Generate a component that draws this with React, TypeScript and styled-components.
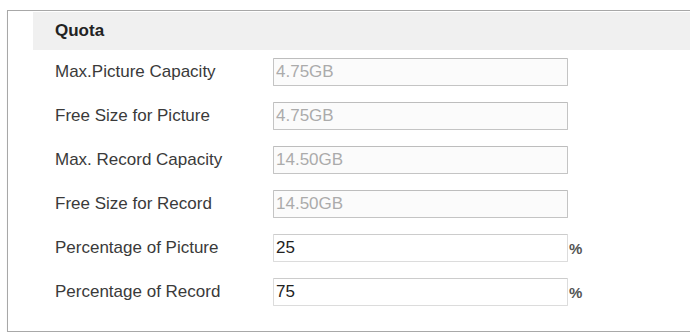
import React from "react";
import styled, { createGlobalStyle } from "styled-components";

const GlobalStyle = createGlobalStyle`
	body {
		margin: 0;
		background: #ffffff;
		font-family: "Liberation Sans", Arial, sans-serif;
	}
`;

const Panel = styled.div`
	margin: 10px 0 0 7px;
	width: 680px;
	height: 320px;
	border: 1px solid #a8a8a8;
	box-shadow: 0 1px 1px rgba(0, 0, 0, 0.08);
	padding-left: 25px;
	box-sizing: content-box;
`;
const Header = styled.div`
	height: 38px;
	margin-top: 1px;
	background-color: #f0f0f0;
	display: flex;
	align-items: center;
	padding-left: 22px;
	font-size: 17px;
	font-weight: bold;
	color: #222;
`;
const Form = styled.div`
	display: flex;
	flex-direction: column;
	gap: 16px;
	padding: 8px 0 0 22px;
`;
const Row = styled.div`
	display: flex;
	align-items: center;
	height: 28px;
`;
const Label = styled.div`
	width: 218px;
	font-size: 17px;
	color: #3a3a3a;
`;
const Input = styled.input<{ $disabled?: boolean }>`
	width: 295px;
	height: 28px;
	box-sizing: border-box;
	padding: 0 2px;
	font-family: "Liberation Sans", Arial, sans-serif;
	font-size: 17px;
	border: 1px solid ${(p) => (p.$disabled ? "#c4c4c4" : "#dcdcdc")};
	border-top-color: ${(p) => (p.$disabled ? "#bdbdbd" : "#cccccc")};
	background: ${(p) => (p.$disabled ? "#fbfbfb" : "#ffffff")};
	color: ${(p) => (p.$disabled ? "#ababab" : "#222")};
	border-radius: 1px;
	outline: none;
`;
const Unit = styled.span`
	margin-left: 1px;
	font-size: 15px;
	font-weight: bold;
	color: #555;
`;

const rows = [
	{ label: "Max.Picture Capacity", value: "4.75GB", disabled: true },
	{ label: "Free Size for Picture", value: "4.75GB", disabled: true },
	{ label: "Max. Record Capacity", value: "14.50GB", disabled: true },
	{ label: "Free Size for Record", value: "14.50GB", disabled: true },
	{ label: "Percentage of Picture", value: "25", unit: "%" },
	{ label: "Percentage of Record", value: "75", unit: "%" },
];

const App = () => {
	return (
		<>
			<GlobalStyle />
			<Panel>
				<Header>Quota</Header>
				<Form>
					{rows.map((r) => (
						<Row key={r.label}>
							<Label>{r.label}</Label>
							<Input
								$disabled={r.disabled}
								readOnly={r.disabled}
								defaultValue={r.value}
							/>
							{r.unit && <Unit>{r.unit}</Unit>}
						</Row>
					))}
				</Form>
			</Panel>
		</>
	);
};

export default App;
